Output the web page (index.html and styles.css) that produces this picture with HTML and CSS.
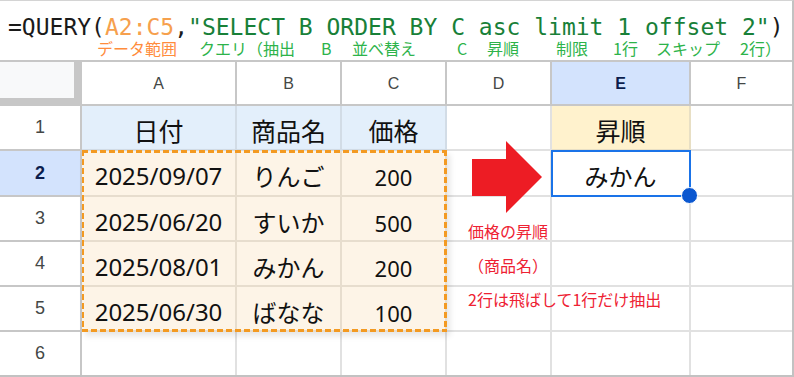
FILE: index.html
```html
<!DOCTYPE html>
<html lang="ja">
<head>
<meta charset="utf-8">
<title>QUERY</title>
<link rel="stylesheet" href="styles.css">
</head>
<body>
<div class="frame">
  <div class="formula">
    <div class="code"><span>=QUERY(</span><span class="rng">A2:C5</span><span>,</span><span class="str">"SELECT B ORDER BY C asc limit 1 offset 2"</span><span>)</span></div>
    <div class="notes">
      <span class="n1 orange">データ範囲</span>
      <span class="n2">クエリ（抽出</span>
      <span class="n3">B</span>
      <span class="n4">並べ替え</span>
      <span class="n5">C</span>
      <span class="n6">昇順</span>
      <span class="n7">制限</span>
      <span class="n8">1行</span>
      <span class="n9">スキップ</span>
      <span class="n10">2行）</span>
    </div>
  </div>
  <div class="sheet">
    <div class="row r0">
      <div class="corner"><div class="corner-in"></div></div>
      <div class="x ch">A</div>
      <div class="x ch">B</div>
      <div class="x ch">C</div>
      <div class="x ch">D</div>
      <div class="x ch on">E</div>
      <div class="x ch last">F</div>
    </div>
    <div class="row r1">
      <div class="x rh">1</div>
      <div class="x hd">日付</div>
      <div class="x hd">商品名</div>
      <div class="x hd">価格</div>
      <div class="x"></div>
      <div class="x res">昇順</div>
      <div class="x last"></div>
    </div>
    <div class="row r2">
      <div class="x rh on">2</div>
      <div class="x data date">2025/09/07</div>
      <div class="x data name">りんご</div>
      <div class="x data price">200</div>
      <div class="x"></div>
      <div class="x out">みかん</div>
      <div class="x last"></div>
    </div>
    <div class="row r3">
      <div class="x rh">3</div>
      <div class="x data date">2025/06/20</div>
      <div class="x data name">すいか</div>
      <div class="x data price">500</div>
      <div class="x"></div>
      <div class="x"></div>
      <div class="x last"></div>
    </div>
    <div class="row r4">
      <div class="x rh">4</div>
      <div class="x data date">2025/08/01</div>
      <div class="x data name">みかん</div>
      <div class="x data price">200</div>
      <div class="x"></div>
      <div class="x"></div>
      <div class="x last"></div>
    </div>
    <div class="row r5">
      <div class="x rh">5</div>
      <div class="x data date">2025/06/30</div>
      <div class="x data name">ばなな</div>
      <div class="x data price">100</div>
      <div class="x"></div>
      <div class="x"></div>
      <div class="x last"></div>
    </div>
    <div class="row r6">
      <div class="x rh bottom">6</div>
      <div class="x bottom"></div>
      <div class="x bottom"></div>
      <div class="x bottom"></div>
      <div class="x bottom"></div>
      <div class="x bottom"></div>
      <div class="x bottom last"></div>
    </div>

    <div class="range"></div>
    <div class="arrow">
      <svg width="105" height="136" viewBox="0 0 105 136"><polygon points="25,53 59,53 59,35 95,71 59,107 59,90 25,90" fill="#ed1c24"/></svg>
    </div>
    <div class="sel"><span class="dot"></span></div>
    <div class="memo">価格の昇順<br>（商品名）<br>2行は飛ばして1行だけ抽出</div>
  </div>
</div>
</body>
</html>
```

FILE: styles.css
```css
html, body {
  margin: 0;
  background: #fff;
}

.frame {
  width: 794px;
  height: 377px;
  box-sizing: border-box;
  border-top: 1px solid #d4d4d4;
  border-right: 2px solid #c2c2c2;
  border-bottom: 2px solid #c2c2c2;
  display: flex;
  flex-direction: column;
  overflow: hidden;
}

.formula {
  height: 61px;
  flex: none;
  box-sizing: border-box;
  border-bottom: 2px solid #c7c7c7;
  padding: 14px 0 0 8px;
}

.code {
  font: 23px/24px "DejaVu Sans Mono", "Liberation Mono", monospace;
  color: #1a1a1a;
  white-space: pre;
}

.code .rng { color: #f6a04d; }
.code .str { color: #188038; }

.notes {
  display: flex;
  margin-top: 1px;
  padding-left: 89px;
  font: 16px/17px "Noto Sans CJK JP", sans-serif;
  color: #2db34a;
  white-space: nowrap;
}

.notes span { flex: none; }
.notes .orange { color: #ff8c3c; }
.n1 { width: 102px; }
.n2 { width: 122px; }
.n3 { width: 31px; }
.n4 { width: 105px; }
.n5 { width: 30px; }
.n6 { width: 69px; }
.n7 { width: 57px; }
.n8 { width: 43px; }
.n9 { width: 84px; }

.sheet {
  flex: 1;
  display: grid;
  grid-template-columns: 82px 155px 105px 105px 105px 139px 1fr;
  grid-template-rows: 44px 45px 46px 45px 45px 45px 1fr;
}

.row { display: contents; }
.r0 > * { grid-row: 1; }
.r1 > * { grid-row: 2; }
.r2 > * { grid-row: 3; }
.r3 > * { grid-row: 4; }
.r4 > * { grid-row: 5; }
.r5 > * { grid-row: 6; }
.r6 > * { grid-row: 7; }
.row > :nth-child(1) { grid-column: 1; }
.row > :nth-child(2) { grid-column: 2; }
.row > :nth-child(3) { grid-column: 3; }
.row > :nth-child(4) { grid-column: 4; }
.row > :nth-child(5) { grid-column: 5; }
.row > :nth-child(6) { grid-column: 6; }
.row > :nth-child(7) { grid-column: 7; }

.corner {
  background: #c7c7c7;
}

.corner-in {
  width: 74px;
  height: 36px;
  background: #f8f9fa;
}

.x {
  box-sizing: border-box;
  border-right: 2px solid #e1e1e1;
  border-bottom: 2px solid #e1e1e1;
  display: flex;
  align-items: center;
  justify-content: center;
  font-family: "Noto Sans", "Noto Sans CJK JP", sans-serif;
  color: #111;
  background: #fff;
}

.x.last { border-right: none; }
.x.bottom { border-bottom: none; }

.ch {
  border-color: #c7c7c7;
  font: 16px "Liberation Sans", Arial, sans-serif;
  color: #444746;
  padding-top: 2px;
}

.rh {
  border-color: #c7c7c7;
  font: 18px "Liberation Sans", Arial, sans-serif;
  color: #444746;
}

.ch.on, .rh.on {
  background: #d3e3fd;
  color: #0b1d4d;
  font-weight: bold;
}

.hd {
  background: #e3effb;
  border-color: #d2dce6;
  font-size: 25px;
  padding-top: 4px;
  font-family: "Noto Sans CJK JP", sans-serif;
}

.res {
  background: #fff2cd;
  border-color: #e8dfc4;
  font-size: 25px;
  padding-top: 4px;
  font-family: "Noto Sans CJK JP", sans-serif;
}

.data {
  background: #fdf4e7;
  border-color: #e7ddce;
  padding-top: 5px;
}

.date { font-size: 24px; }
.name { font-size: 24px; font-family: "Noto Sans CJK JP", sans-serif; }
.price { font-size: 22px; padding-top: 8px; }

.out {
  font-size: 24px;
  padding-top: 4px;
  font-family: "Noto Sans CJK JP", sans-serif;
}

.range {
  grid-column: 2 / 5;
  grid-row: 3 / 7;
  margin-top: -1px;
  background:
    repeating-linear-gradient(90deg, #f39a22 0 6px, transparent 6px 9px) top / 100% 3px no-repeat,
    repeating-linear-gradient(90deg, #f39a22 0 6px, transparent 6px 9px) bottom / 100% 3px no-repeat,
    repeating-linear-gradient(180deg, #f39a22 0 6px, transparent 6px 9px) left / 2px 100% no-repeat,
    repeating-linear-gradient(180deg, #f39a22 0 6px, transparent 6px 9px) right / 3px 100% no-repeat;
  box-shadow: 3px 4px 6px rgba(0, 0, 0, 0.10);
}

.arrow {
  grid-column: 5 / 6;
  grid-row: 2 / 5;
}

.arrow svg { display: block; }

.sel {
  grid-column: 6 / 7;
  grid-row: 3 / 4;
  margin: -1px 0 0 -1px;
  border: 2px solid #1a73e8;
  position: relative;
}

.dot {
  position: absolute;
  right: -9px;
  bottom: -9px;
  width: 15px;
  height: 15px;
  border-radius: 50%;
  background: #0b57d0;
  border: 1px solid #fff;
}

.memo {
  grid-column: 5 / 8;
  grid-row: 4 / 7;
  padding: 17px 0 0 21px;
  font: 16px/34px "Noto Sans CJK JP", sans-serif;
  color: #ee2233;
  white-space: nowrap;
}
```
